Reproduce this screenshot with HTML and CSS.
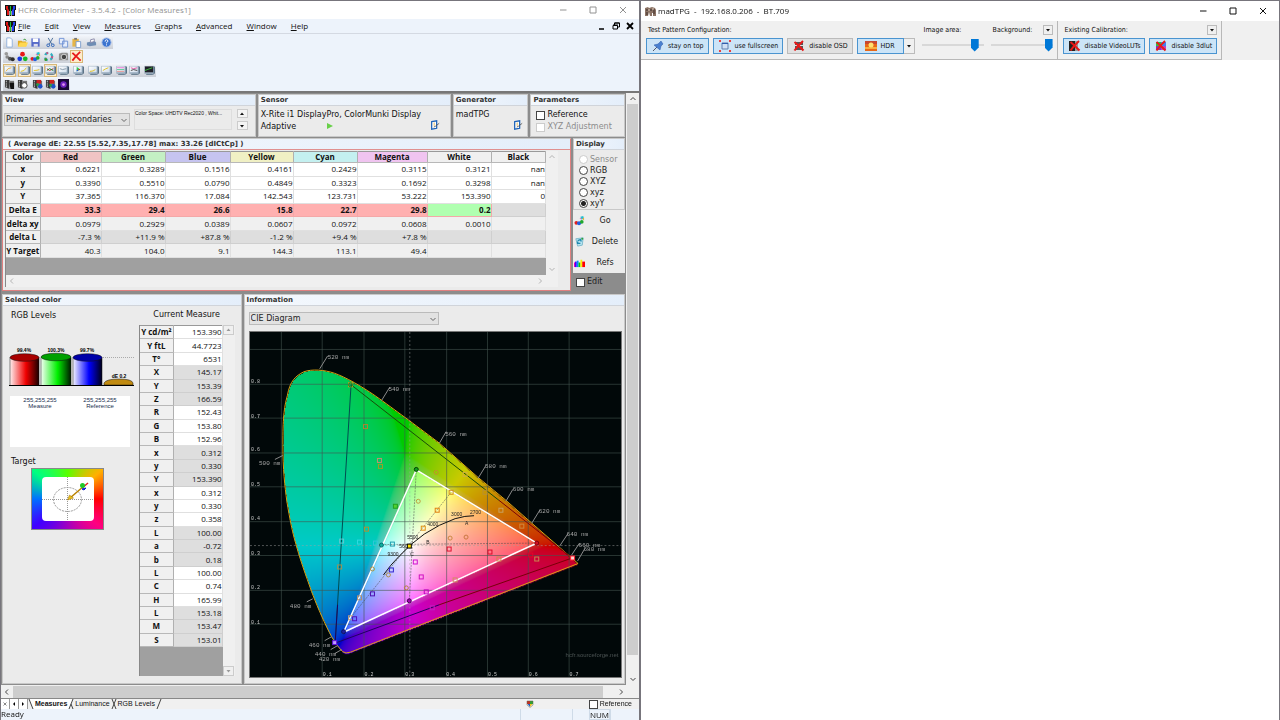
FILE: index.html
```html
<!DOCTYPE html>
<html lang="en">
<head>
  <meta charset="UTF-8">
  <title>HCFR Colorimeter</title>
  <link rel="stylesheet" href="styles.css">
</head>
<body>

<svg class="defs" aria-hidden="true">
  <defs>
    <linearGradient id="gRed"><stop offset="0" stop-color="#fff0f0"/><stop offset=".55" stop-color="#f00000"/><stop offset="1" stop-color="#180000"/></linearGradient>
    <linearGradient id="gGreen"><stop offset="0" stop-color="#f4fff4"/><stop offset=".55" stop-color="#00f000"/><stop offset="1" stop-color="#001800"/></linearGradient>
    <linearGradient id="gBlue"><stop offset="0" stop-color="#f4f4ff"/><stop offset=".55" stop-color="#0000ff"/><stop offset="1" stop-color="#000018"/></linearGradient>
    <linearGradient id="gScreen" x2="1" y2="1"><stop offset="0" stop-color="#fff"/><stop offset="1" stop-color="#cfdcec"/></linearGradient>
    <symbol id="logo" viewBox="0 0 11 11"><path fill="#111" d="M0 0h11v11H0z"/><path fill="#e01818" d="M1 1h2v3l1 1v5H2V5L1 4z"/><path fill="#18c030" d="M5 1h1v9H5z"/><path fill="#2440f0" d="M8 1h2v3L9 5v5H7V5l1-1z"/><path fill="#fff" d="M0 5h1v6H0zM4 6h.6v5H4zM6.4 6H7v5h-.6zM10 5h1v6h-1z"/></symbol>
    <symbol id="monitor" viewBox="0 0 12 12"><path fill="#5c7286" d="M10 1l2 1v7l-2 1.500z"/><path fill="#8ea4b8" d="M.5 1h10v8.500H.5z"/><path fill="url(#gScreen)" d="M1 1.500h8.500v6.500H1z"/><path fill="#6d8294" d="M3 9.500h6l1.500 1.500H2z"/></symbol>
    <symbol id="film" viewBox="0 0 12 12"><path fill="#3a3a3a" d="M1 1h5v10l-5-2z"/><path fill="#fff" d="M2 2h1v1H2zM2 4h1v1H2zM2 6h1v1H2zM2 8h1v1H2z"/><path fill="#777" d="M6 2h5v7H6z"/></symbol>
    <symbol id="balls" viewBox="0 0 12 12"><circle cx="2.500" cy="8.500" r="2" fill="#e02020"/><circle cx="5.500" cy="9" r="2.200" fill="#2060e0"/><circle cx="8.500" cy="7.500" r="2" fill="#20a830"/><path fill="#20c0d0" d="M7 2l3-1 1 3-3 1z"/><path fill="#f0b020" d="M9 4l2-1v3z"/><path fill="#e060c0" d="M6 4l2-1v2z"/></symbol>
    <symbol id="cross" viewBox="0 0 12 12"><path d="M1.500 2Q5 5 10.500 10.500M10 1Q5.500 5 1.500 10.500" stroke="#e81818" stroke-width="2" fill="none"/></symbol>
    <symbol id="edit" viewBox="0 0 12 12"><path fill="#fff" stroke="#1c62b8" stroke-width="1.500" d="M2 2l6-1v9l-6 1z"/><path stroke="#555" d="M4.500 8.500l2-1L11 4" fill="none"/><path d="M5 3v4" stroke="#e0b040"/></symbol>
    <symbol id="up" viewBox="0 0 8 8"><path d="M1.500 5L4 2.500 6.500 5" fill="none" stroke="currentColor"/></symbol>
    <symbol id="down" viewBox="0 0 8 8"><path d="M1.500 3L4 5.500 6.500 3" fill="none" stroke="currentColor"/></symbol>
    <symbol id="left" viewBox="0 0 8 8"><path d="M5 1.500L2.500 4 5 6.500" fill="none" stroke="currentColor"/></symbol>
    <symbol id="right" viewBox="0 0 8 8"><path d="M3 1.500L5.500 4 3 6.500" fill="none" stroke="currentColor"/></symbol>
    <symbol id="tri" viewBox="0 0 8 8"><path d="M2 3h4L4 5.500z" fill="currentColor"/></symbol>
    <symbol id="triUp" viewBox="0 0 8 8"><path d="M2 5h4L4 2.500z" fill="currentColor"/></symbol>
    <symbol id="min" viewBox="0 0 8 8"><path d="M1 4h6.500" stroke="currentColor"/></symbol>
    <symbol id="max" viewBox="0 0 8 8"><path d="M1 1h6v6H1z" fill="none" stroke="currentColor"/></symbol>
    <symbol id="close" viewBox="0 0 8 8"><path d="M1 1l6 6M7 1L1 7" stroke="currentColor"/></symbol>
  </defs>
</svg>

<div class="desktop">

<!-- HCFR window -->
<section class="window hcfr">
  <header class="titlebar">
    <svg class="logo"><use href="#logo"/></svg>
    <span class="title">HCFR Colorimeter - 3.5.4.2 - [Color Measures1]</span>
    <div class="winbtns">
      <button aria-label="Minimize"><svg><use href="#min"/></svg></button>
      <button aria-label="Maximize"><svg><use href="#max"/></svg></button>
      <button aria-label="Close"><svg><use href="#close"/></svg></button>
    </div>
  </header>

  <nav class="menubar">
    <svg class="logo"><use href="#logo"/></svg>
    <a href="#"><u>F</u>ile</a>
    <a href="#"><u>E</u>dit</a>
    <a href="#"><u>V</u>iew</a>
    <a href="#"><u>M</u>easures</a>
    <a href="#"><u>G</u>raphs</a>
    <a href="#"><u>A</u>dvanced</a>
    <a href="#"><u>W</u>indow</a>
    <a href="#"><u>H</u>elp</a>
    <div class="mdibtns">
      <button aria-label="Minimize child"><svg viewBox="0 0 8 8"><path d="M1 7h5" stroke="#000" stroke-width="1.500"/></svg></button>
      <button aria-label="Restore child"><svg viewBox="0 0 8 8"><path d="M2.500 3V1h5v4H6M1 3.500h4.500v3.500H1zM1 3h5M2.500 1h5" fill="none" stroke="#000"/></svg></button>
      <button aria-label="Close child"><svg viewBox="0 0 8 8"><path d="M1 1l6 6M7 1L1 7" stroke="#000" stroke-width="1.800"/></svg></button>
    </div>
  </nav>

  <div class="toolbars">
    <div class="toolbar">
      <button aria-label="New"><svg viewBox="0 0 12 12"><path d="M3 1h4l2 2v8H3z" fill="#fff" stroke="#8fb0dc"/></svg></button>
      <button aria-label="Open"><svg viewBox="0 0 12 12"><path d="M1 4h4l1 1h4v5H1z" fill="#e0a820"/><path d="M3 6h9l-2 4.500H1z" fill="#ffd850"/><path d="M7 3q2-2 3 1" fill="none" stroke="#3a9a3a"/></svg></button>
      <button aria-label="Save"><svg viewBox="0 0 12 12"><path d="M1.500 1.500h9v9h-9z" fill="#5468c8"/><path d="M3 1.500h6v4H3z" fill="#fff"/><path d="M4 7.500h4.500v3H4z" fill="#dde"/></svg></button>
      <i></i>
      <button aria-label="Cut"><svg viewBox="0 0 12 12"><path d="M3.500 1L7.500 8M8.500 1L4.500 8" stroke="#456a98" fill="none"/><circle cx="3.500" cy="9" r="1.500" fill="none" stroke="#2860b8"/><circle cx="8.500" cy="9" r="1.500" fill="none" stroke="#2860b8"/></svg></button>
      <button aria-label="Copy"><svg viewBox="0 0 12 12"><path d="M1.500 1.500h5v6h-5zM5 4.500h5.500v6.500H5z" fill="#e4ecfb" stroke="#6f92d4"/></svg></button>
      <button aria-label="Paste"><svg viewBox="0 0 12 12"><path d="M1.500 2h7v8.500h-7z" fill="#e6b548"/><path d="M3.500 1h3v2h-3z" fill="#777"/><path d="M5.500 5h5v6.500h-5z" fill="#fff" stroke="#7c9ccc"/></svg></button>
      <i></i>
      <button aria-label="Print"><svg viewBox="0 0 12 12"><path d="M1 6l8-2 2 2v3L4 10 1 9z" fill="#6f8db4"/><path d="M5 3l4-1v3L5 6z" fill="#fff" stroke="#88a"/></svg></button>
      <i></i>
      <button aria-label="About"><svg viewBox="0 0 12 12"><circle cx="6" cy="6" r="5" fill="#3c74d0" stroke="#a8c0e8"/><path d="M4.500 5q0-2 1.500-2t1.500 1.500Q7.500 5.500 6 6v1M6 8v1.200" stroke="#fff" fill="none"/></svg></button>
    </div>
    <div class="toolbar">
      <button aria-label="Grayscale"><svg viewBox="0 0 12 12"><circle cx="2.500" cy="3" r="2" fill="#999"/><circle cx="3.500" cy="6.500" r="2" fill="#888"/><circle cx="6.500" cy="8.500" r="2.200" fill="#555"/><circle cx="9.500" cy="9" r="2.200" fill="#2c2c2c"/></svg></button>
      <button aria-label="Primaries"><svg viewBox="0 0 12 12"><circle cx="6" cy="3.500" r="2.600" fill="#e81818"/><circle cx="3" cy="8.500" r="2.600" fill="#1838e0"/><circle cx="9" cy="8.500" r="2.600" fill="#18b828"/></svg></button>
      <button aria-label="Saturations"><svg><use href="#balls"/></svg></button>
      <button aria-label="Color checker"><svg viewBox="0 0 12 12"><circle cx="6" cy="6" r="4" fill="none" stroke="#30b0c0" stroke-width="2.500" stroke-dasharray="4 3"/><circle cx="6" cy="6" r="4" fill="none" stroke="#d05080" stroke-width="2" stroke-dasharray="2 6"/><circle cx="3" cy="9.500" r="1.500" fill="#30a030"/></svg></button>
      <i></i>
      <button aria-label="Camera"><svg viewBox="0 0 12 12"><path d="M1 3l3-1h6l1 1v7H1z" fill="#909090"/><circle cx="6.500" cy="6.500" r="3" fill="#444" stroke="#ddd"/></svg></button>
      <button class="on" aria-label="Stop"><svg><use href="#cross"/></svg></button>
    </div>
    <div class="toolbar">
      <button class="on" aria-label="Luminance"><svg viewBox="0 0 12 12"><use href="#monitor"/><path d="M2 7q2-4 6-4" stroke="#e8b040" fill="none"/></svg></button>
      <i></i>
      <button class="on" aria-label="Gamma"><svg viewBox="0 0 12 12"><use href="#monitor"/><path d="M2 7q4 0 6-4" stroke="#e0c020" fill="none"/></svg></button>
      <button aria-label="Near black"><svg viewBox="0 0 12 12"><use href="#monitor"/><path d="M2 6q4 0 6-1" stroke="#e0c020" fill="none"/></svg></button>
      <button class="on" aria-label="RGB"><svg viewBox="0 0 12 12"><use href="#monitor"/><path d="M2 4l3 2 4-2" stroke="#d02020" fill="none"/><path d="M2 6l3-2 4 2" stroke="#208020" fill="none"/></svg></button>
      <button aria-label="Temperature"><svg viewBox="0 0 12 12"><use href="#monitor"/><path d="M2 4l3 1 4-1" stroke="#8898a8" fill="none"/></svg></button>
      <i></i>
      <button aria-label="CIE"><svg viewBox="0 0 12 12"><use href="#monitor"/><path d="M4 2v5l4-2z" fill="#30d050"/><path d="M4 5v2l2-1z" fill="#2040e0"/><path d="M6 4l2 1-2 1z" fill="#e02020"/></svg></button>
      <i></i>
      <button aria-label="Sat luminance"><svg viewBox="0 0 12 12"><use href="#monitor"/><path d="M2 7q4 0 6-2" stroke="#e0c020" fill="none"/></svg></button>
      <button aria-label="Near white"><svg viewBox="0 0 12 12"><use href="#monitor"/><path d="M2 6q3-2 6-3" stroke="#e0c020" fill="none"/></svg></button>
      <i></i>
      <button aria-label="Shifts"><svg viewBox="0 0 12 12"><use href="#monitor"/><path d="M1 3h8" stroke="#e870d0"/><path d="M1 5h8" stroke="#50c890"/><path d="M1 7h8" stroke="#e89090"/></svg></button>
      <button aria-label="Combined"><svg viewBox="0 0 12 12"><use href="#monitor"/><path d="M2 3l3 1 4-1" stroke="#e050a0" fill="none"/><path d="M2 6l3-1 4 1" stroke="#404040" fill="none"/></svg></button>
      <i></i>
      <button aria-label="Measures graph"><svg viewBox="0 0 12 12"><use href="#monitor"/><path d="M1 1.500h9v6.500H1z" fill="#202028"/><path d="M1 6l8-3" stroke="#40c040"/></svg></button>
    </div>
    <div class="toolbar">
      <button aria-label="Film 1"><svg viewBox="0 0 12 12"><use href="#film"/><path d="M6 4h5v7H7z" fill="#111"/></svg></button>
      <button aria-label="Film 2"><svg viewBox="0 0 12 12"><use href="#film"/><circle cx="8" cy="7" r="3" fill="#fff" stroke="#444"/></svg></button>
      <i></i>
      <button aria-label="Film 3"><svg viewBox="0 0 12 12"><use href="#film"/><path d="M5 1h5v4H5z" fill="#d02020"/><circle cx="9" cy="8" r="2.500" fill="#2050c8"/><circle cx="6" cy="6" r="1.500" fill="#20a040"/></svg></button>
      <button aria-label="Film 4"><svg viewBox="0 0 12 12"><use href="#film"/><path d="M5 1h5v4H5z" fill="#d02020"/><circle cx="9" cy="8" r="2.500" fill="#2050c8"/><circle cx="6" cy="7" r="1.500" fill="#20a040"/></svg></button>
      <button aria-label="Animation"><svg viewBox="0 0 12 12"><path d="M0 0h12v12H0z" fill="#1a0838"/><circle cx="6" cy="6" r="3.500" fill="#7020c0"/><circle cx="6" cy="6" r="1.500" fill="#e090f0"/></svg></button>
    </div>
  </div>

  <div class="workarea">
    <main class="work">
      <div class="row row-top">
        <section class="panel">
          <h2>View</h2>
          <div class="body view-body">
            <label class="combo"><select aria-label="View"><option>Primaries and secondaries</option></select><svg><use href="#down"/></svg></label>
            <div class="note">Color Space: UHDTV Rec2020 , Whit...</div>
            <div class="spin">
              <button aria-label="Previous"><svg><use href="#triUp"/></svg></button>
              <button aria-label="Next"><svg><use href="#tri"/></svg></button>
            </div>
          </div>
        </section>
        <section class="panel">
          <h2>Sensor</h2>
          <div class="body device">
            <p>X-Rite i1 DisplayPro, ColorMunki Display</p>
            <p class="second">Adaptive
              <button class="play" aria-label="Start"><svg viewBox="0 0 8 8"><path d="M1 1l6 3-6 3z" fill="#68d048"/></svg></button>
              <button class="cfg" aria-label="Configure sensor"><svg><use href="#edit"/></svg></button></p>
          </div>
        </section>
        <section class="panel generator">
          <h2>Generator</h2>
          <div class="body device">
            <p>madTPG</p>
            <p class="second"><button class="cfg" aria-label="Configure generator"><svg><use href="#edit"/></svg></button></p>
          </div>
        </section>
        <section class="panel">
          <h2>Parameters</h2>
          <div class="body params">
            <label><input type="checkbox"> Reference</label>
            <label class="off"><input type="checkbox" disabled> XYZ Adjustment</label>
          </div>
        </section>
      </div>

      <div class="row row-mid">
        <section class="panel measures">
          <h2>( Average dE: 22.55 [5.52,7.35,17.78] max: 33.26 [dICtCp] )</h2>
          <div class="sheet">
            <div class="sheet-main">
              <table class="grid colors">
                <thead>
                  <tr><th>Color</th><th class="c-red">Red</th><th class="c-green">Green</th><th class="c-blue">Blue</th><th class="c-yellow">Yellow</th><th class="c-cyan">Cyan</th><th class="c-magenta">Magenta</th><th>White</th><th>Black</th></tr>
                </thead>
                <tbody>
                  <tr><th>x</th><td>0.6221</td><td>0.3289</td><td>0.1516</td><td>0.4161</td><td>0.2429</td><td>0.3115</td><td>0.3121</td><td>nan</td></tr>
                  <tr><th>y</th><td>0.3390</td><td>0.5510</td><td>0.0790</td><td>0.4849</td><td>0.3323</td><td>0.1692</td><td>0.3298</td><td>nan</td></tr>
                  <tr><th>Y</th><td>37.365</td><td>116.370</td><td>17.084</td><td>142.543</td><td>123.731</td><td>53.222</td><td>153.390</td><td>0</td></tr>
                  <tr class="delta"><th>Delta E</th><td>33.3</td><td>29.4</td><td>26.6</td><td>15.8</td><td>22.7</td><td>29.8</td><td class="good">0.2</td><td class="none"></td></tr>
                  <tr class="light"><th>delta xy</th><td>0.0979</td><td>0.2929</td><td>0.0389</td><td>0.0607</td><td>0.0972</td><td>0.0608</td><td>0.0010</td><td></td></tr>
                  <tr class="dark"><th>delta L</th><td>-7.3 %</td><td>+11.9 %</td><td>+87.8 %</td><td>-1.2 %</td><td>+9.4 %</td><td>+7.8 %</td><td></td><td></td></tr>
                  <tr class="light"><th>Y Target</th><td>40.3</td><td>104.0</td><td>9.1</td><td>144.3</td><td>113.1</td><td>49.4</td><td></td><td></td></tr>
                </tbody>
              </table>
              <div class="filler"></div>
              <div class="hbar faint"><svg><use href="#left"/></svg><svg><use href="#right"/></svg></div>
            </div>
            <div class="vbar faint"><svg><use href="#up"/></svg><svg><use href="#down"/></svg></div>
          </div>
        </section>
        <aside class="side">
          <section class="panel">
            <h2>Display</h2>
            <div class="body radios">
              <label class="off"><input type="radio" name="disp" disabled>Sensor</label>
              <label><input type="radio" name="disp">RGB</label>
              <label><input type="radio" name="disp">XYZ</label>
              <label><input type="radio" name="disp">xyz</label>
              <label><input type="radio" name="disp" checked>xyY</label>
            </div>
          </section>
          <div class="actions">
            <button><svg><use href="#balls"/></svg><span>Go</span></button>
            <button><svg viewBox="0 0 12 12"><path d="M2 3l8-1-1 8-5 1z" fill="#b8e4f0" stroke="#7ab8cc"/><path d="M4 5l3-1 1 2M7 8L4 8 4 6" stroke="#2088b0" stroke-width="1.500" fill="none"/><path d="M8 3l2 0" stroke="#30a040" stroke-width="2"/></svg><span>Delete</span></button>
            <button><svg viewBox="0 0 12 12"><path d="M0 6h2v5H0z" fill="#f0a"/><path d="M1 5h2v6H1z" fill="#40f"/><path d="M3 4h2v7H3z" fill="#08f"/><path d="M5 6h2v5H5z" fill="#0c0"/><path d="M7 3h2v8H7z" fill="#fe0"/><path d="M9 5h3v6H9z" fill="#f00"/></svg><span>Refs</span></button>
          </div>
          <label class="edit"><input type="checkbox">Edit</label>
        </aside>
      </div>

      <div class="row row-bot">
        <section class="panel">
          <h2>Selected color</h2>
          <div class="body selected">
            <div class="sel-left">
              <h3>RGB Levels</h3>
              <svg class="levels" viewBox="9 327 126 60">
                <path d="M103 357.500h31" stroke="#aaa" stroke-dasharray="1 1"/>
                <g stroke="#111" stroke-width=".5">
                  <path d="M10 357.500v28h29v-28z" fill="url(#gRed)"/><ellipse cx="24.500" cy="357.500" rx="14.500" ry="3.800" fill="#a80000"/>
                  <path d="M41 357.500v28h30v-28z" fill="url(#gGreen)"/><ellipse cx="56" cy="357" rx="15" ry="3.800" fill="#00a000"/>
                  <path d="M73 357.500v28h29v-28z" fill="url(#gBlue)"/><ellipse cx="87.500" cy="357.500" rx="14.500" ry="3.800" fill="#0000a8"/>
                  <path d="M104 385v-2q2-4 15-4t14 4v2z" fill="#c08a10"/>
                </g>
                <path d="M9 385.500h125" stroke="#000"/>
                <text x="24" y="352">99.4%</text><text x="56" y="352">100.3%</text><text x="87" y="352">99.7%</text><text x="119" y="378">dE 0.2</text>
              </svg>
              <div class="swatch"><div>255,255,255<br>Measure</div><div>255,255,255<br>Reference</div></div>
              <h3>Target</h3>
              <div class="target">
                <svg viewBox="42 477 52 44">
                  <rect x="42" y="477" width="52" height="44" rx="4" fill="#fff"/>
                  <path d="M42 499.500h52M67.500 477v44" stroke="#999" stroke-dasharray="1 1"/>
                  <ellipse cx="67.500" cy="499.500" rx="14" ry="12" fill="none" stroke="#999" stroke-dasharray="2 1"/>
                  <path d="M70 498L84 486" stroke="#b88000" stroke-width="1.500"/><path d="M67.500 500l2-5 4 3z" fill="#e8c020" stroke="#a07000" stroke-width=".5"/>
                  <path d="M82 488l6-5" stroke="#e02020" stroke-width="1.500"/><path d="M82 489l4-1-2 2z" fill="#1020d0" stroke="#1020d0"/><circle cx="82.500" cy="485.500" r="2.500" fill="#20c828"/>
                </svg>
              </div>
            </div>
            <div class="sel-right">
              <h3>Current Measure</h3>
              <div class="sheet">
                <div class="sheet-main">
                  <table class="grid values">
                    <tbody>
                      <tr><th>Y cd/m²</th><td>153.390</td></tr>
                      <tr><th>Y ftL</th><td>44.7723</td></tr>
                      <tr><th>T°</th><td>6531</td></tr>
                      <tr class="dark"><th>X</th><td>145.17</td></tr>
                      <tr class="dark"><th>Y</th><td>153.39</td></tr>
                      <tr class="dark"><th>Z</th><td>166.59</td></tr>
                      <tr><th>R</th><td>152.43</td></tr>
                      <tr><th>G</th><td>153.80</td></tr>
                      <tr><th>B</th><td>152.96</td></tr>
                      <tr class="dark"><th>x</th><td>0.312</td></tr>
                      <tr class="dark"><th>y</th><td>0.330</td></tr>
                      <tr class="dark"><th>Y</th><td>153.390</td></tr>
                      <tr><th>x</th><td>0.312</td></tr>
                      <tr><th>y</th><td>0.330</td></tr>
                      <tr><th>z</th><td>0.358</td></tr>
                      <tr class="dark"><th>L</th><td>100.00</td></tr>
                      <tr class="dark"><th>a</th><td>-0.72</td></tr>
                      <tr class="dark"><th>b</th><td>0.18</td></tr>
                      <tr><th>L</th><td>100.00</td></tr>
                      <tr><th>C</th><td>0.74</td></tr>
                      <tr><th>H</th><td>165.99</td></tr>
                      <tr class="dark"><th>L</th><td>153.18</td></tr>
                      <tr class="dark"><th>M</th><td>153.47</td></tr>
                      <tr class="dark"><th>S</th><td>153.01</td></tr>
                    </tbody>
                  </table>
                  <div class="filler"></div>
                </div>
                <div class="vbar boxed"><svg><use href="#triUp"/></svg><svg><use href="#tri"/></svg></div>
              </div>
            </div>
          </div>
        </section>

        <section class="panel">
          <h2>Information</h2>
          <div class="body info">
            <label class="combo wide"><select aria-label="Graph"><option>CIE Diagram</option></select><svg><use href="#down"/></svg></label>
            <div class="plot">
              <canvas id="gamut" width="373" height="346"></canvas>
              <svg id="cie" viewBox="250 332 373 346">
                <g class="gridlines"><path d="M281.500 332v346M322.500 332v346M364.500 332v346M405.500 332v346M447.500 332v346M488.500 332v346M529.500 332v346M570.500 332v346M250 349.500h373M250 384.500h373M250 418.500h373M250 453.500h373M250 487.500h373M250 522.500h373M250 556.500h373M250 591.500h373M250 625.500h373"/></g>
                <path id="locus" class="locus" d="M579.500 564.500L533 524 507 501 479 478 440 443.500 410 421 382 400.500C362 386 345 377 335 373.500C325 370 312 369 304 372C296 376 290 381 287.500 396C284 408 283 420 283 445C283 470 285 487 287 502C290 520 292 530 295 541C300 560 306 576 312 593C318 609 326 627 332 638C336 645 340 650 343 653Q346 655.500 351 653.500Z"/>
                <path class="cross" d="M410.500 332v346M250 546.500h373"/>
                <path class="thin" d="M417 470L410 602M452 493L351 619M382 545.500L538 544"/>
                <path d="M351.500 385L335.500 644.500" stroke="#004c50"/><path d="M351.500 385L500 501" stroke="#184c08"/><path d="M500 501L573.500 559 440 606" stroke="#780008" fill="none"/><path d="M440 606L335.500 644.500 338 606" stroke="#200060" fill="none"/>
                <path class="measured" d="M417 470.500L538 544 344 633.500Z"/>
                <path class="planck" d="M384 576Q391 566 400 557Q412 544 425 535Q440 525 456 519.500Q466 516.500 475 516.500"/>
                <g class="ticks"><path d="M320 369l8-13M382 401l8-13M440 444l7-12M479 479l8-13M507 502l7-12M533 524l8-13M561 547l8-12M573 556l8-12M579 562l7-12M283 456l-8 4M313 600l-6 3M332 638l-7 4M338 647l-7 4M342 651l-7 4"/></g>
                <g class="nm">
                  <text x="328" y="359">520 nm</text><text x="389" y="391">540 nm</text><text x="446" y="436">560 nm</text><text x="486" y="469">580 nm</text><text x="514" y="492">600 nm</text><text x="540" y="514">620 nm</text><text x="568" y="537">640 nm</text><text x="580" y="548">660 nm</text><text x="585" y="552">680 nm</text><text x="259" y="466">500 nm</text><text x="290" y="609">480 nm</text><text x="309" y="648">460 nm</text><text x="315" y="657">440 nm</text><text x="319" y="662">420 nm</text>
                </g>
                <g class="axis">
                  <text x="251" y="383">0.8</text><text x="251" y="418">0.7</text><text x="251" y="452">0.6</text><text x="251" y="487">0.5</text><text x="251" y="521">0.4</text><text x="251" y="556">0.3</text><text x="251" y="590">0.2</text><text x="251" y="625">0.1</text>
                  <text x="323" y="677">0.1</text><text x="365" y="677">0.2</text><text x="406" y="677">0.3</text><text x="447" y="677">0.4</text><text x="489" y="677">0.5</text><text x="530" y="677">0.6</text><text x="571" y="677">0.7</text>
                </g>
                <g class="kelvin">
                  <text x="388" y="557">9300</text><text x="400" y="549">5600</text><text x="408" y="540">5500</text><text x="428" y="527">4000</text><text x="452" y="517">3000</text><text x="471" y="515">2700</text><text x="427" y="545">B</text><text x="411" y="557">C</text><text x="466" y="526">A</text>
                </g>
                <text class="credit" x="567" y="658">hcfr.sourceforge.net</text>
              </svg>
            </div>
          </div>
        </section>
      </div>
    </main>
    <div class="vbar main-bar"><svg><use href="#up"/></svg><div class="thumb"></div><svg><use href="#down"/></svg></div>
  </div>

  <div class="hbar main-hbar"><svg><use href="#left"/></svg><div class="thumb"></div><svg><use href="#right"/></svg></div>

  <div class="tabs">
    <div class="tabnav">
      <button aria-label="Close tab"><svg><use href="#close"/></svg></button>
      <button aria-label="Previous tab"><svg viewBox="0 0 4 4"><path d="M3 0v4L1 2z"/></svg></button>
      <button aria-label="Next tab"><svg viewBox="0 0 4 4"><path d="M1 0v4l2-2z"/></svg></button>
    </div>
    <svg class="slant" viewBox="0 0 6 10"><path d="M1 0l4 10h1V0z" fill="#fff"/><path d="M1 0l4 10" stroke="#444"/></svg>
    <a class="active" href="#">Measures</a>
    <svg class="slant" viewBox="0 0 6 10"><path d="M0 0h5L1 10H0z" fill="#fff"/><path d="M5 0L1 10M3 5l2 5" stroke="#444"/></svg>
    <a href="#">Luminance</a>
    <svg class="slant" viewBox="0 0 6 10"><path d="M5 0L1 10M1 0l4 10" stroke="#444"/></svg>
    <a href="#">RGB Levels</a>
    <svg class="slant" viewBox="0 0 6 10"><path d="M5 0L1 10" stroke="#444"/></svg>
    <svg class="shield" viewBox="0 0 8 8"><path d="M1 1h3v3H1z" fill="#c03020"/><path d="M4 1h3v3H4z" fill="#30a030"/><path d="M1.500 4H4v3z" fill="#2060c0"/><path d="M4 4h2.500L4 7z" fill="#f0c020"/><path d="M1 1h6v4L4 7.500 1 5z" fill="none" stroke="#665" stroke-width=".5"/></svg>
    <label class="tabref"><input type="checkbox">Reference</label>
  </div>

  <footer class="status">
    <span>Ready</span>
    <div class="cells"><i></i><i></i><b>NUM</b><i></i></div>
  </footer>
</section>

<!-- madTPG window -->
<section class="window madtpg">
  <header class="titlebar">
    <svg class="logo" viewBox="0 0 11 11"><path d="M0 2l3-1 1 1 3-1 3 1 1 2v6H8V7H7v3H5L4 6 3 10H0z" fill="#8a7264"/><path d="M1 4h2M5 4h2M9 3v5M2 6v3" stroke="#3c2c28"/><path d="M4 3v2M8 2v2" stroke="#dcc8b8"/></svg>
    <span class="title">madTPG &nbsp;-&nbsp; 192.168.0.206 &nbsp;-&nbsp; BT.709</span>
    <div class="winbtns">
      <button aria-label="Minimize"><svg><use href="#min"/></svg></button>
      <button aria-label="Maximize"><svg><use href="#max"/></svg></button>
      <button aria-label="Close"><svg><use href="#close"/></svg></button>
    </div>
  </header>
  <div class="ribbon">
    <div class="group">
      <div class="cell">
        <div class="caption">Test Pattern Configuration:</div>
        <div class="buttons">
          <button class="tog on"><svg viewBox="0 0 12 12"><path d="M1 11l4-4" stroke="#556"/><path d="M2 5l4-1 3-3 2 3-2 2-1 4z" fill="#4a80d0" stroke="#2858a8" stroke-width=".5"/></svg>stay on top</button>
          <button class="tog on"><svg viewBox="0 0 12 12"><path d="M3 3h6v6H3z" fill="#cfe0f4" stroke="#6080b0"/><path d="M3 3.500h6" stroke="#3060b0"/><path d="M0 0h2v2H0zM10 0h2v2h-2zM0 10h2v2H0zM10 10h2v2h-2z" fill="#e84040"/></svg>use fullscreen</button>
          <button class="tog"><svg viewBox="0 0 12 12"><path d="M2 2h8v3H2zM2 6h8v4H2z" fill="#555"/><use href="#cross"/></svg>disable OSD</button>
          <div class="split">
            <button class="tog on hdr"><svg viewBox="0 0 12 12"><path d="M0 1h12v10H0z" fill="#e86818"/><path d="M0 1h12v3H0z" fill="#c84830"/><path d="M0 7h12v2H0z" fill="#f8b040"/><circle cx="6" cy="5" r="2.500" fill="#ffe070"/></svg>HDR</button>
            <button class="drop" aria-label="HDR options"><svg><use href="#tri"/></svg></button>
          </div>
        </div>
      </div>
      <div class="cell">
        <label class="caption" for="area">Image area:</label>
        <input type="range" id="area" min="0" max="100" value="91">
      </div>
      <div class="cell">
        <div class="caption"><label for="bg">Background:</label><button class="mini" aria-label="Background options"><svg><use href="#tri"/></svg></button></div>
        <input type="range" id="bg" min="0" max="100" value="100">
      </div>
    </div>
    <div class="group">
      <div class="cell">
        <div class="caption">Existing Calibration:<button class="mini" aria-label="Calibration options"><svg><use href="#tri"/></svg></button></div>
        <div class="buttons">
          <button class="tog on"><svg viewBox="0 0 12 12"><path d="M0 1h6v10H0z" fill="#222"/><path d="M6 1h3v10H6z" fill="#999"/><use href="#cross"/></svg>disable VideoLUTs</button>
          <button class="tog on"><svg viewBox="0 0 12 12"><path d="M1 2h5v4H1z" fill="#30c040"/><path d="M6 2h5v4H6z" fill="#4080f0"/><path d="M1 6h5v4H1z" fill="#8030c0"/><path d="M6 6h5v4H6z" fill="#c040c0"/><use href="#cross"/></svg>disable 3dlut</button>
        </div>
      </div>
    </div>
  </div>
</section>

</div>
<script src="script.js"></script>
</body>
</html>
```

FILE: styles.css
```css
:root {
  --ui: "Open Sans", "Noto Sans", sans-serif;
  --panel: "DejaVu Sans", sans-serif;
  --tahoma: "DejaVu Sans Condensed", "DejaVu Sans", sans-serif;
  --face: #ebebeb;
  --bar: #edf3fb;
  --blue: #cce4f7;
}

* {
  box-sizing: border-box;
}

body {
  margin: 0;
  font-family: var(--ui);
  font-size: 8px;
  line-height: 10px;
  color: #111;
}

h2, h3, p {
  margin: 0;
}

button {
  font: inherit;
  color: inherit;
  border: 0;
  padding: 0;
  background: none;
  display: flex;
  align-items: center;
  justify-content: center;
}

a {
  color: inherit;
  text-decoration: none;
}

svg {
  width: 8px;
  height: 8px;
  flex: none;
  display: block;
}

.defs {
  position: absolute;
  width: 0;
  height: 0;
}

.desktop {
  display: grid;
  grid-template-columns: 1fr 1fr;
  min-height: 100vh;
}

.window {
  display: flex;
  flex-direction: column;
  border: 1px solid #77757c;
  border-bottom: 0;
  min-width: 0;
}

.titlebar {
  display: flex;
  align-items: center;
  height: 18px;
  padding-left: 4px;
  gap: 2px;
  background: #fff;
}

.logo {
  width: 11px;
  height: 11px;
}

.hcfr .titlebar {
  color: #929292;
}

.winbtns {
  display: flex;
  gap: 22px;
  margin-left: auto;
  padding-right: 12px;
}

/* menu */
.menubar {
  display: flex;
  align-items: center;
  height: 15px;
  padding-left: 4px;
  background: var(--bar);
  border-bottom: 1px solid #d4d9e2;
}

.menubar a {
  margin: 0 12px 0 2px;
}

.mdibtns {
  display: flex;
  gap: 6px;
  margin-left: auto;
  padding-right: 5px;
}

/* toolbars */
.toolbars {
  display: flex;
  flex-direction: column;
  align-items: flex-start;
  height: 57px;
  background: var(--bar);
  padding: 1px 0 0 2px;
}

.toolbar {
  display: flex;
  align-items: center;
  height: 14px;
  background: linear-gradient(#f4f7fc, #ccd0d8);
}

.toolbar i {
  width: 2px;
}

.toolbar button {
  width: 13px;
  height: 13px;
}

.toolbar svg {
  width: 11px;
  height: 11px;
}

.toolbar .on {
  background: #fdeccb;
  box-shadow: inset 0 0 0 1px #d8b878;
}

/* work area */
.workarea {
  display: flex;
  flex: 1;
  border-top: 2px solid #777;
}

.work {
  flex: 1;
  min-width: 0;
  display: flex;
  flex-direction: column;
  gap: 3px;
  padding: 1px 1px 1px 1px;
  background: #8c8c8c;
}

.row {
  display: grid;
  gap: 2px;
}

.row-top {
  grid-template-columns: 255fr 194fr 76fr 95fr;
  height: 41px;
}

.row-mid {
  grid-template-columns: 1fr 52px;
  height: 153px;
}

.row-bot {
  grid-template-columns: 240fr 382fr;
  flex: 1;
}

.panel {
  display: flex;
  flex-direction: column;
  background: var(--face);
  border: 1px solid #c8c8c8;
  min-width: 0;
}

.panel h2 {
  font-family: var(--panel);
  font-size: 7px;
  font-weight: bold;
  line-height: 10px;
  height: 11px;
  padding-left: 2px;
  color: #333;
  background: linear-gradient(90deg, #f4f8fd, #e4eefa);
  border-bottom: 1px solid #d0d4da;
  white-space: nowrap;
}

.body {
  font-family: var(--panel);
  flex: 1;
  min-width: 0;
  white-space: nowrap;
}

.view-body {
  display: flex;
  padding: 3px 7px 6px 1px;
  gap: 4px;
}

.combo {
  display: grid;
  align-items: center;
  align-self: center;
  width: 126px;
}

.combo select,
.combo svg {
  grid-area: 1 / 1;
}

.combo svg {
  justify-self: end;
  margin-right: 2px;
  color: #666;
  pointer-events: none;
}

.combo select {
  appearance: none;
  width: 100%;
  height: 13px;
  padding: 0 1px;
  border: 1px solid #bbb;
  border-radius: 0;
  background: #e2e2e2;
  font: inherit;
  color: #222;
}

.note {
  flex: 1;
  font-family: "Liberation Sans", sans-serif;
  font-size: 5px;
  line-height: 7px;
  border: 1px solid #ddd;
}

.spin {
  display: flex;
  flex-direction: column;
  justify-content: space-between;
  margin-left: 1px;
}

.spin button {
  width: 11px;
  height: 9px;
  border: 1px solid #ccc;
  background: #f4f4f4;
}

.device {
  padding: 3px 2px;
}

.device p {
  display: flex;
  height: 12px;
  align-items: center;
}

.device .cfg {
  margin: 0 8px 4px auto;
}

.device .cfg svg {
  width: 10px;
  height: 10px;
}

.device .play {
  margin: 0 0 3px 30px;
}

.generator .cfg {
  margin-right: 2px;
}

input[type="checkbox"],
input[type="radio"] {
  appearance: none;
  width: 9px;
  height: 9px;
  margin: 0 2px 0 0;
  border: 1px solid #444;
  background: #fff;
  flex: none;
}

input[type="radio"] {
  border-radius: 50%;
}

input[type="radio"]:checked {
  background: radial-gradient(#222 0 2px, #fff 3px);
}

input:disabled {
  border-color: #ccc;
}

.off {
  color: #8c8c8c;
}

.params {
  padding: 3px 5px;
}

.params label,
.radios label,
.edit,
.tabref {
  display: flex;
  align-items: center;
}

.params label {
  height: 12px;
}

/* measures */
.measures {
  border: 1px solid #e08080;
  border-top-color: #c8c8c8;
}

.measures h2 {
  padding-left: 5px;
  border-bottom-color: #e09090;
}

.sheet {
  display: flex;
  flex: 1;
}

.measures .sheet {
  margin: 1px 12px 3px 2px;
}

.sheet-main {
  flex: 1;
  display: flex;
  flex-direction: column;
  border-left: 1px solid #888;
}

.filler {
  flex: 1;
  background: #a0a0a0;
}

.hbar,
.vbar {
  display: flex;
  justify-content: space-between;
  align-items: center;
  background: #f0f0f0;
  color: #444;
}

.hbar {
  height: 12px;
  padding: 0 2px;
}

.vbar {
  width: 12px;
  flex-direction: column;
  padding: 2px 0;
}

.faint {
  color: #b4b4b4;
}

.measures .vbar {
  padding-bottom: 14px;
}

.grid {
  width: 100%;
  border-collapse: collapse;
  table-layout: fixed;
  font-family: var(--ui);
  font-size: 8px;
  line-height: 10px;
  border-top: 1px solid #999;
}

.grid th,
.grid td {
  padding: 0;
  white-space: nowrap;
}

.grid th {
  background: #f0f0f0;
  border-right: 1px solid #b0b0b0;
  border-bottom: 1px solid #b8b8b8;
}

.grid td {
  text-align: right;
  background: #fff;
  border-right: 1px solid #e0e0e0;
  border-bottom: 1px solid #e0e0e0;
}

.colors {
  height: 107px;
}

.colors th:nth-child(1) { width: 34px; }
.colors th:nth-child(2) { width: 61px; }
.colors th:nth-child(3) { width: 64px; }
.colors th:nth-child(4) { width: 65px; }
.colors th:nth-child(5) { width: 63px; }
.colors th:nth-child(6) { width: 64px; }
.colors th:nth-child(7) { width: 70px; }
.colors th:nth-child(8) { width: 64px; }

.grid .c-red { background: #f0c4c4; }
.grid .c-green { background: #c4f0c4; }
.grid .c-blue { background: #c6c4f0; }
.grid .c-yellow { background: #f0f0c4; }
.grid .c-cyan { background: #c4f0f0; }
.grid .c-magenta { background: #f0c4f0; }

.grid .delta td {
  background: #ffb0b0;
  border-color: #f4a8a8;
  font-weight: bold;
}

.grid .delta .good { background: #b0ffb0; }
.grid .delta .none,
.grid .dark td { background: #dedede; border-color: #cfcfcf; }
.grid .light td { background: #f0f0f0; }

.values {
  height: 322px;
}

.values th {
  width: 34px;
}

/* display column */
.side {
  display: flex;
  flex-direction: column;
  color: #222;
  font-family: var(--panel);
}

.side .panel {
  flex: none;
  height: 72px;
}

.radios {
  padding: 4px 5px;
}

.radios label {
  height: 11px;
}

.actions {
  background: #ececec;
}

.actions button {
  width: 100%;
  height: 21px;
  padding-left: 1px;
}

.actions svg {
  width: 11px;
  height: 11px;
}

.actions span {
  flex: 1;
}

.edit {
  flex: 1;
  padding-left: 3px;
}

/* selected colour */
.selected {
  display: flex;
  gap: 3px;
  padding: 4px 6px 7px 6px;
}

.body h3 {
  font-size: 8px;
  font-weight: normal;
  line-height: 12px;
  padding-left: 2px;
}

.sel-left {
  flex: 1;
  display: flex;
  flex-direction: column;
}

.levels {
  width: 126px;
  height: 60px;
  margin-top: 5px;
  font-family: "Liberation Sans", sans-serif;
  font-size: 5px;
  font-weight: bold;
  text-anchor: middle;
}

.swatch {
  display: flex;
  width: 120px;
  height: 51px;
  margin: 9px 1px;
  background: #fff;
  color: #203050;
  font-size: 6px;
  line-height: 6px;
  font-family: "Liberation Sans", sans-serif;
  text-align: center;
}

.swatch div {
  flex: 1;
  padding-top: 1px;
}

.target {
  display: grid;
  place-items: center;
  width: 73px;
  height: 62px;
  margin-left: 22px;
  border: 1px solid #888;
  background: conic-gradient(#58ff00, #ffb000 50deg, #ff0000 90deg, #ff0080 130deg, #a000c0 180deg, #4000ff 230deg, #0070ff 270deg, #00ff80 310deg, #58ff00);
}

.target svg {
  width: 52px;
  height: 44px;
}

.sel-right {
  width: 96px;
  display: flex;
  flex-direction: column;
}

.sel-right h3 {
  text-align: center;
  padding: 0;
  line-height: 10px;
}

.sel-right .sheet {
  margin-top: 5px;
}

.boxed svg {
  color: #999;
  width: 11px;
  height: 10px;
  border: 1px solid #ccc;
}

.sel-right .vbar {
  padding: 0;
}

.info {
  padding: 6px 2px 5px 4px;
}

.combo.wide {
  width: 190px;
  margin-bottom: 6px;
}

.plot {
  display: grid;
  background: #010809;
  border: 1px solid #777;
}

.plot canvas,
.plot svg {
  grid-area: 1 / 1;
  width: 100%;
  height: auto;
  aspect-ratio: 373 / 346;
}

.plot path { fill: none; }
.plot .gridlines path { stroke: #445450; stroke-opacity: .6; }
.plot .locus { stroke: #d8a010; }
.plot .cross { stroke: #a0a0a0; stroke-dasharray: 2 2; stroke-opacity: .5; }
.plot .thin { stroke: #444; stroke-dasharray: 2 1; stroke-opacity: .5; }
.plot .measured { stroke: #fff; stroke-width: 1.5; }
.plot .planck { stroke: #111; }
.plot .ticks path { stroke: #8c8c8c; }
.nm { font: 6px "Liberation Mono", monospace; fill: #a8a8a8; }
.axis { font: 5px "Liberation Mono", monospace; fill: #c8c8c8; }
.kelvin { font: 5px "Liberation Sans", sans-serif; fill: #222; }
.credit { font: 6px "Liberation Sans", sans-serif; fill: #4c5454; }

/* scrollbars */
.main-bar {
  width: 13px;
}

.thumb {
  background: #cdcdcd;
}

.main-bar .thumb {
  width: 11px;
  flex: 1;
  margin: 1px 0 20px;
}

.main-hbar {
  height: 13px;
  padding: 0 14px 0 2px;
}

.main-hbar .thumb {
  flex: 1;
  height: 12px;
  margin: 0 14px 0 2px;
}

/* tabs */
.tabs {
  display: flex;
  align-items: center;
  height: 11px;
  border-top: 1px solid #888;
  background: #f0f0f0;
  font-family: "Liberation Sans", sans-serif;
  font-size: 7px;
}

.tabnav {
  display: flex;
}

.tabnav button {
  width: 9px;
  height: 10px;
  border-right: 1px solid #999;
  background: #fff;
}

.tabnav svg {
  width: 4px;
  height: 4px;
}

.slant {
  width: 6px;
  height: 10px;
}

.tabs a {
  padding: 0 1px;
}

.tabs .active {
  background: #fff;
  font-weight: bold;
}

.shield {
  margin-left: auto;
}

.tabref {
  margin: 0 7px 0 55px;
}

.status {
  display: flex;
  justify-content: space-between;
  height: 11px;
  background: var(--bar);
}

.cells {
  display: flex;
  padding-right: 12px;
}

.cells i {
  width: 52px;
  border-left: 1px solid #cfdbe8;
}

.cells i + i,
.cells b + i {
  width: 17px;
}

.cells b {
  font-weight: normal;
  border: 1px solid #cfdbe8;
  line-height: 10px;
}

/* madTPG */
.madtpg {
  background: #fff;
}

.madtpg .titlebar {
  height: 20px;
}

.ribbon {
  display: flex;
  background: #f0f0f0;
  font-family: var(--tahoma);
  font-size: 7px;
}

.group {
  display: flex;
  gap: 7px;
  height: 39px;
  padding: 3px 4px 0 5px;
  border-right: 1px solid #b8b8b8;
  border-bottom: 1px solid #b8b8b8;
}

.cell {
  display: flex;
  flex-direction: column;
}

.caption {
  display: flex;
  justify-content: space-between;
  align-items: center;
  height: 11px;
  margin-bottom: 3px;
  padding-left: 2px;
}

.mini {
  width: 10px;
  height: 10px;
  border: 1px solid #bbb;
}

.buttons {
  display: flex;
  gap: 4px;
}

.split {
  display: flex;
}

.tog {
  gap: 4px;
  height: 16px;
  padding: 0 4px 0 5px;
  border: 1px solid #bbb;
  background: #e1e1e1;
  white-space: nowrap;
}

.tog.hdr {
  padding: 0 8px 0 7px;
}

.tog.on {
  border-color: #4a94d0;
  background: var(--blue);
}

.tog svg {
  width: 12px;
  height: 12px;
}

.drop {
  width: 11px;
  border: 1px solid #bbb;
  border-left: 0;
}

input[type="range"] {
  appearance: none;
  width: 62px;
  height: 14px;
  margin: 0;
  background: linear-gradient(#d8d8d8, #d8d8d8) center / 100% 2px no-repeat;
}

input[type="range"]::-webkit-slider-thumb {
  appearance: none;
  width: 8px;
  height: 13px;
  background: #0078d7;
  clip-path: polygon(0 0, 100% 0, 100% 70%, 50% 100%, 0 70%);
}
```

FILE: script.js
```javascript
// chart origin and scale: x = 0 at 281.3px, y = 0 at 660px
const X0 = 281.3, SX = 413.5, Y0 = 660, SY = 344.6;
const LEFT = 250, TOP = 332;

function gamma(v) {
  return v <= 0 ? 0 : Math.pow(v, 1 / 2.2);
}

function xyToRgb(x, y) {
  const X = x / y, Z = (1 - x - y) / y;
  let r = 3.2406 * X - 1.5372 - 0.4986 * Z;
  let g = -0.9689 * X + 1.8758 + 0.0415 * Z;
  let b = 0.0557 * X - 0.204 + 1.057 * Z;
  // lift out-of-gamut colors a little before clipping
  const lift = Math.max(0, -Math.min(r, g, b)) * 0.5;
  r += lift;
  g += lift;
  b += lift;
  const m = Math.max(r, g, b);
  return [gamma(r / m), gamma(g / m), gamma(b / m)];
}

function fillGamut() {
  const canvas = document.getElementById("gamut");
  const ctx = canvas.getContext("2d");
  const locus = new Path2D(document.getElementById("locus").getAttribute("d"));
  const inner = new Path2D("M417 470.5L538 544 344 633.5Z");
  const img = ctx.createImageData(canvas.width, canvas.height);
  for (let j = 0; j < canvas.height; j++) {
    for (let i = 0; i < canvas.width; i++) {
      const px = i + LEFT, py = j + TOP;
      if (!ctx.isPointInPath(locus, px, py)) continue;
      const rgb = xyToRgb((px - X0) / SX, Math.max(0.005, (Y0 - py) / SY));
      const inside = ctx.isPointInPath(inner, px, py);
      const k = (j * canvas.width + i) * 4;
      for (let c = 0; c < 3; c++) {
        img.data[k + c] = inside ? 50 + 205 * rgb[c] : 202 * rgb[c];
      }
      img.data[k + 3] = 255;
    }
  }
  ctx.putImageData(img, 0, 0);
}

// shape, x, y, stroke, fill
const markers = [
  ["s", 351, 385, "#c8a020"], ["c", 351, 385, "#208020"], ["s", 366, 427, "#b08030"], ["s", 380, 461, "#c09070"],
  ["s", 381, 467, "#a0a020"], ["c", 417, 470, "#004000", "#10a020"], ["c", 437, 473, "#c09030"], ["s", 466, 475, "#d0b040"],
  ["s", 452, 493, "#d09020"], ["s", 486, 493, "#b89030"], ["s", 502, 511, "#c8a060"], ["s", 523, 527, "#d08840"],
  ["c", 451, 539, "#c88840"], ["c", 467, 538, "#c87840"], ["s", 450, 550, "#e01030"], ["s", 491, 553, "#e00828"],
  ["s", 532, 556, "#e00828"], ["s", 538, 560, "#c88850"], ["s", 574, 559, "#ff2030", "#ffd0d0"], ["s", 500, 560, "#d08850"],
  ["s", 456, 581, "#d09060"], ["c", 538, 544, "#800010", "#d01020"], ["s", 396, 507, "#20a020", "#50d030"], ["c", 419, 502, "#c0a040"],
  ["s", 438, 511, "#e08010"], ["s", 424, 529, "#e09010"], ["s", 367, 530, "#b09030"], ["s", 342, 542, "#60c8d0"],
  ["s", 360, 543, "#30d8e0"], ["s", 376, 544, "#30c8d8"], ["c", 382, 546, "#007070", "#10b0a0"], ["s", 393, 545, "#20a0b0"],
  ["s", 340, 568, "#a09050"], ["c", 373, 570, "#b09040"], ["s", 392, 571, "#3020d0"], ["c", 389, 576, "#b09050"],
  ["s", 416, 563, "#d010d0"], ["s", 422, 578, "#d010c0"], ["c", 407, 589, "#b08040"], ["s", 427, 593, "#c000c0"],
  ["c", 410, 602, "#400050", "#a000b0"], ["s", 433, 609, "#c020c0"], ["s", 373, 595, "#5010b0"], ["s", 360, 599, "#b09070"],
  ["s", 351, 619, "#c0a080"], ["s", 355, 620, "#5010c0"], ["c", 344, 633, "#101060", "#2020a0"], ["s", 335, 644, "#6010e0", "#c0a0ff"],
  ["s", 410, 547, "#000", "#ffe000"]
];

function drawMarkers() {
  const svg = document.getElementById("cie");
  for (const [shape, x, y, stroke, fill] of markers) {
    const el = document.createElementNS("http://www.w3.org/2000/svg", shape === "s" ? "rect" : "circle");
    if (shape === "s") {
      el.setAttribute("x", x - 2);
      el.setAttribute("y", y - 2);
      el.setAttribute("width", 4);
      el.setAttribute("height", 4);
    } else {
      el.setAttribute("cx", x);
      el.setAttribute("cy", y);
      el.setAttribute("r", 2);
    }
    el.setAttribute("stroke", stroke);
    el.setAttribute("fill", fill || "none");
    svg.appendChild(el);
  }
}

fillGamut();
drawMarkers();
```
